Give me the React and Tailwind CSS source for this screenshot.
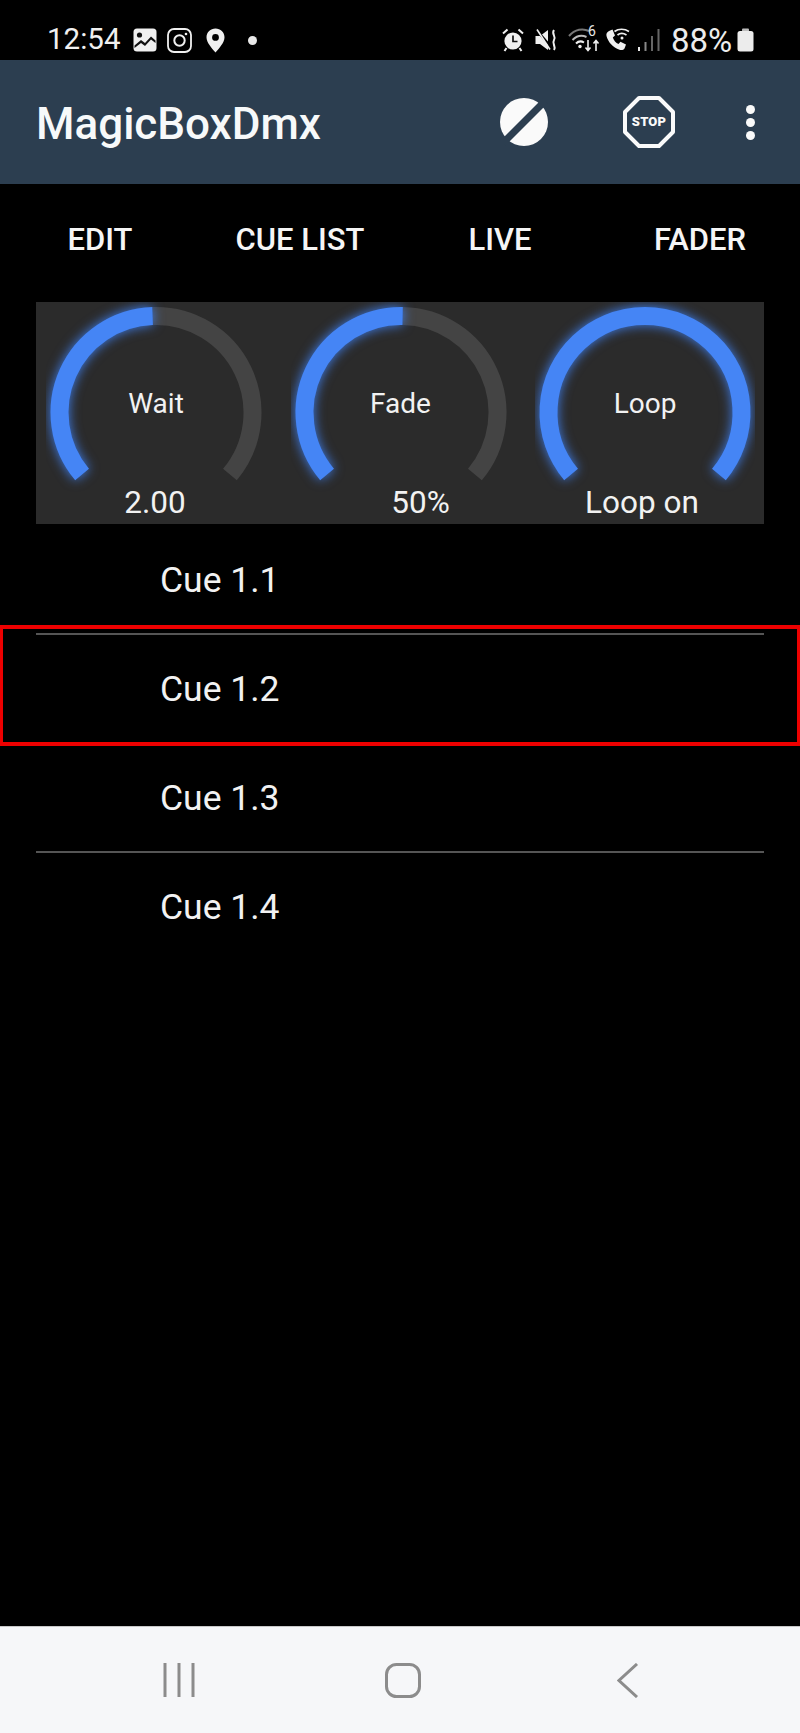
const TABS = ['EDIT', 'CUE LIST', 'LIVE', 'FADER']

const KNOBS = [
  { label: 'Wait', value: '2.00', end: 268, valueClass: 'left-[-1px] right-[1px]' },
  { label: 'Fade', value: '50%', end: 271, valueClass: 'left-[20px] right-[-20px]' },
  { label: 'Loop', value: 'Loop on', end: 400, valueClass: 'left-[-7px] right-[-1px]' },
]

const CUES = ['Cue 1.1', 'Cue 1.2', 'Cue 1.3', 'Cue 1.4']

// angles in degrees, clockwise from east
function arc(start, end, r = 96.5, cx = 110, cy = 110.5) {
  const pt = a => {
    const rad = (a * Math.PI) / 180
    return `${(cx + r * Math.cos(rad)).toFixed(2)} ${(cy + r * Math.sin(rad)).toFixed(2)}`
  }
  return `M ${pt(start)} A ${r} ${r} 0 ${end - start > 180 ? 1 : 0} 1 ${pt(end)}`
}

function Knob({ label, value, end, valueClass }) {
  return (
    <div className="relative w-[220px] h-[222px] text-[#f2f2f2]">
      <svg width="220" height="222" viewBox="0 0 220 222" fill="none">
        {end < 400 && <path d={arc(end, 400)} stroke="#444444" strokeWidth="18" />}
        <path
          d={arc(140, end)}
          stroke="#4585f5"
          strokeWidth="18"
          className="drop-shadow-[0_0_6px_#3f7fee]"
        />
      </svg>
      <div className="absolute left-0 right-0 top-[85px] text-center text-[28px] leading-[34px]">{label}</div>
      <div className={`absolute top-[182px] text-center text-[31.5px] leading-[38px] ${valueClass}`}>{value}</div>
    </div>
  )
}

function StatusLeft() {
  return (
    <div className="flex items-center">
      <span className="text-[29.5px] leading-none text-[#f0f0f0] w-[86px]">12:54</span>
      <svg width="24" height="24" viewBox="0 0 24 24">
        <rect x="0.5" y="0.5" width="23" height="23" rx="3.5" fill="#f0f0f0" />
        <circle cx="6.5" cy="7" r="2.6" fill="#111" />
        <path d="M1.5 17.5 L8 12 L12 15 L18 8.5 L22.5 12.5 L22.5 15 L18 11.5 L12 18 L8 15 L1.5 20 Z" fill="#111" />
      </svg>
      <svg width="25" height="25" viewBox="0 0 25 25" fill="none" stroke="#f0f0f0" className="ml-[10px]">
        <rect x="1" y="1" width="23" height="23" rx="6" strokeWidth="1.8" />
        <circle cx="12.5" cy="12.5" r="5.2" strokeWidth="2" />
        <circle cx="19" cy="6" r="1.3" fill="#f0f0f0" stroke="none" />
      </svg>
      <svg width="19" height="25" viewBox="0 0 19 25" className="ml-[14px]">
        <path
          fillRule="evenodd"
          d="M9.5 0.5 C14.5 0.5 18.5 4.4 18.5 9.3 C18.5 14.5 13.5 20 9.5 24.5 C5.5 20 0.5 14.5 0.5 9.3 C0.5 4.4 4.5 0.5 9.5 0.5 Z M9.5 6 A3.4 3.4 0 1 0 9.5 12.8 A3.4 3.4 0 1 0 9.5 6 Z"
          fill="#f0f0f0"
        />
      </svg>
      <div className="ml-[23px] w-[9px] h-[9px] rounded-full bg-[#e8e8e8]" />
    </div>
  )
}

function StatusRight() {
  return (
    <div className="flex items-center">
      {/* alarm */}
      <svg width="22" height="24" viewBox="0 0 22 24" fill="none">
        <circle cx="11" cy="13" r="8.6" fill="#f0f0f0" />
        <path d="M11 7.5 V13.5 H15.5" stroke="#111" strokeWidth="1.7" />
        <path d="M1 5.5 L5.5 1.5 M21 5.5 L16.5 1.5 M4.5 20 L2.5 23 M17.5 20 L19.5 23" stroke="#f0f0f0" strokeWidth="2" />
      </svg>
      {/* muted speaker */}
      <svg width="23" height="24" viewBox="0 0 23 24" fill="none" className="ml-[11px]">
        <path d="M0.5 8 H5 L13 2 V22 L5 16 H0.5 Z" fill="#f0f0f0" />
        <path d="M1 1.5 L17 20" stroke="#000" strokeWidth="2.6" />
        <path d="M2 1.5 L15 21.5" stroke="#f0f0f0" strokeWidth="1.6" />
        <path d="M19 2 C16 6 21.5 8 19 12 C16.5 16 21.5 18 19 22" stroke="#f0f0f0" strokeWidth="2" />
      </svg>
      {/* wifi with traffic arrows */}
      <div className="relative ml-[10px] w-[33px] h-[26px]">
        <svg width="33" height="26" viewBox="0 0 33 26" fill="none">
          <path d="M1 9 C7 2 15 1 21 4" stroke="#777" strokeWidth="2" />
          <path d="M4.5 13 C9 8.5 14 8 18.5 10" stroke="#bbb" strokeWidth="2" />
          <path d="M8 16.5 C10.5 14 13.5 14 16 15.5" stroke="#f0f0f0" strokeWidth="2" />
          <circle cx="12" cy="19.5" r="1.7" fill="#f0f0f0" />
          <path d="M20 13 V23 M17.5 20.5 L20 23.5 L22.5 20.5" stroke="#f0f0f0" strokeWidth="1.6" />
          <path d="M28 24 V14 M25.5 16.5 L28 13.5 L30.5 16.5" stroke="#f0f0f0" strokeWidth="1.6" />
        </svg>
        <span className="absolute left-[20px] top-[-3px] text-[14px] leading-[14px] text-[#e8e8e8]">6</span>
      </div>
      {/* wifi call */}
      <svg width="25" height="24" viewBox="0 0 25 24" fill="none" className="ml-[4px]">
        <path
          d="M4 3 L7.5 1.5 L10 7.5 L7.8 9.5 C8.8 12.5 10.8 14.8 13.5 16 L15.5 13.8 L21 16.5 L19.5 20.5 C18.5 22 16.5 22.5 14.5 21.8 C8 19.5 3 14 1.5 8 C1 5.8 2 4 4 3 Z"
          fill="#f0f0f0"
        />
        <path d="M9.5 3.5 C13.5 0.5 19.5 0.5 24 3.5" stroke="#f0f0f0" strokeWidth="1.7" />
        <path d="M12.5 7 C15 5 18.5 5 21.5 7" stroke="#f0f0f0" strokeWidth="1.7" />
        <circle cx="17" cy="10" r="1.5" fill="#f0f0f0" />
      </svg>
      {/* signal */}
      <svg width="22" height="24" viewBox="0 0 22 24" fill="none" className="ml-[8px]">
        <rect x="0" y="19" width="2" height="4" fill="#e8e8e8" />
        <rect x="6.5" y="14" width="2" height="9" fill="#888" />
        <rect x="13" y="8" width="2" height="15" fill="#666" />
        <rect x="19.5" y="1" width="2" height="22" fill="#666" />
      </svg>
      <span className="ml-[11px] text-[33px] leading-none text-[#ececec] w-[63px]">88%</span>
      {/* battery */}
      <svg width="17" height="24" viewBox="0 0 17 24" className="ml-[3px]">
        <rect x="5" y="0.5" width="7" height="3" rx="1" fill="#bdbdbd" />
        <rect x="0.5" y="3" width="16" height="20.5" rx="2.5" fill="#ececec" />
      </svg>
    </div>
  )
}

function AppBar() {
  return (
    <div className="h-[124px] bg-[#2c3e50] flex items-center pl-[36px] shrink-0">
      <div className="text-[44px] leading-none font-medium text-[#f7f9fa] w-[464px] mt-[3px]">MagicBoxDmx</div>
      <div className="flex items-center">
        <svg width="48" height="48" viewBox="0 0 48 48">
          <circle cx="24" cy="24" r="24" fill="#fafafa" />
          <path d="M3 45 L45 3" stroke="#2c3e50" strokeWidth="7" />
        </svg>
        <div className="relative ml-[75px] w-[52px] h-[52px]">
          <svg width="52" height="52" viewBox="0 0 52 52" fill="none">
            <path d="M16 2 H36 L50 16 V36 L36 50 H16 L2 36 V16 Z" stroke="#fafafa" strokeWidth="4" strokeLinejoin="round" />
          </svg>
          <span className="absolute inset-0 flex items-center justify-center text-[13px] font-black text-[#fafafa] tracking-[0.2px]">STOP</span>
        </div>
        <div className="ml-[71px] flex flex-col gap-[4px]">
          <div className="w-[9px] h-[9px] rounded-full bg-[#fafafa]" />
          <div className="w-[9px] h-[9px] rounded-full bg-[#fafafa]" />
          <div className="w-[9px] h-[9px] rounded-full bg-[#fafafa]" />
        </div>
      </div>
    </div>
  )
}

export default function App() {
  return (
    <div className="relative w-[800px] h-[1733px] bg-black flex flex-col font-['Roboto',sans-serif] overflow-hidden">
      {/* Status bar */}
      <div className="h-[60px] pl-[47px] pr-[46px] pt-[20px] flex items-center justify-between shrink-0">
        <StatusLeft />
        <StatusRight />
      </div>

      <AppBar />

      {/* Tabs */}
      <div className="h-[112px] grid grid-cols-4 shrink-0">
        {TABS.map(t => (
          <div key={t} className="flex items-center justify-center text-[31px] font-medium text-[#f5f5f5]">{t}</div>
        ))}
      </div>

      {/* Knob panel */}
      <div className="mt-[6px] ml-[36px] mr-[36px] h-[222px] bg-[#2b2b2b] pl-[10px] pr-[9px] flex justify-between shrink-0">
        {KNOBS.map(k => <Knob key={k.label} {...k} />)}
      </div>

      {/* Cue list */}
      <div className="mt-[2px] flex-1">
        {CUES.map((c, i) => (
          <div key={c} className="relative h-[109px] flex items-center pl-[160px] text-[35.5px] text-[#f2f2f2]">
            <span className="mt-[1px]">{c}</span>
            {i < CUES.length - 1 && (
              <div className="absolute left-[36px] right-[36px] bottom-0 h-[2px] bg-[#555555]" />
            )}
          </div>
        ))}
      </div>

      {/* Selected cue outline */}
      <div className="absolute left-0 right-0 top-[625px] h-[121px] border-x-[3px] border-y-[4px] border-[#ee0000]" />

      {/* Nav bar */}
      <div className="h-[107px] bg-[#f6f7f9] border-t border-[#c8c8c8] shrink-0 flex items-start pt-[36px] pl-[163px]">
        <svg width="32" height="35" viewBox="0 0 32 35" fill="none" stroke="#8c8c8c" strokeWidth="3">
          <path d="M2 0 V34 M16 0 V34 M30 0 V34" />
        </svg>
        <svg width="36" height="35" viewBox="0 0 36 35" fill="none" stroke="#8c8c8c" strokeWidth="3" className="ml-[190px]">
          <rect x="1.5" y="1.5" width="33" height="32" rx="10" />
        </svg>
        <svg width="22" height="35" viewBox="0 0 22 35" fill="none" stroke="#8c8c8c" strokeWidth="3" className="ml-[196px]">
          <path d="M20 1 L2 17.5 L20 34" />
        </svg>
      </div>
    </div>
  )
}
